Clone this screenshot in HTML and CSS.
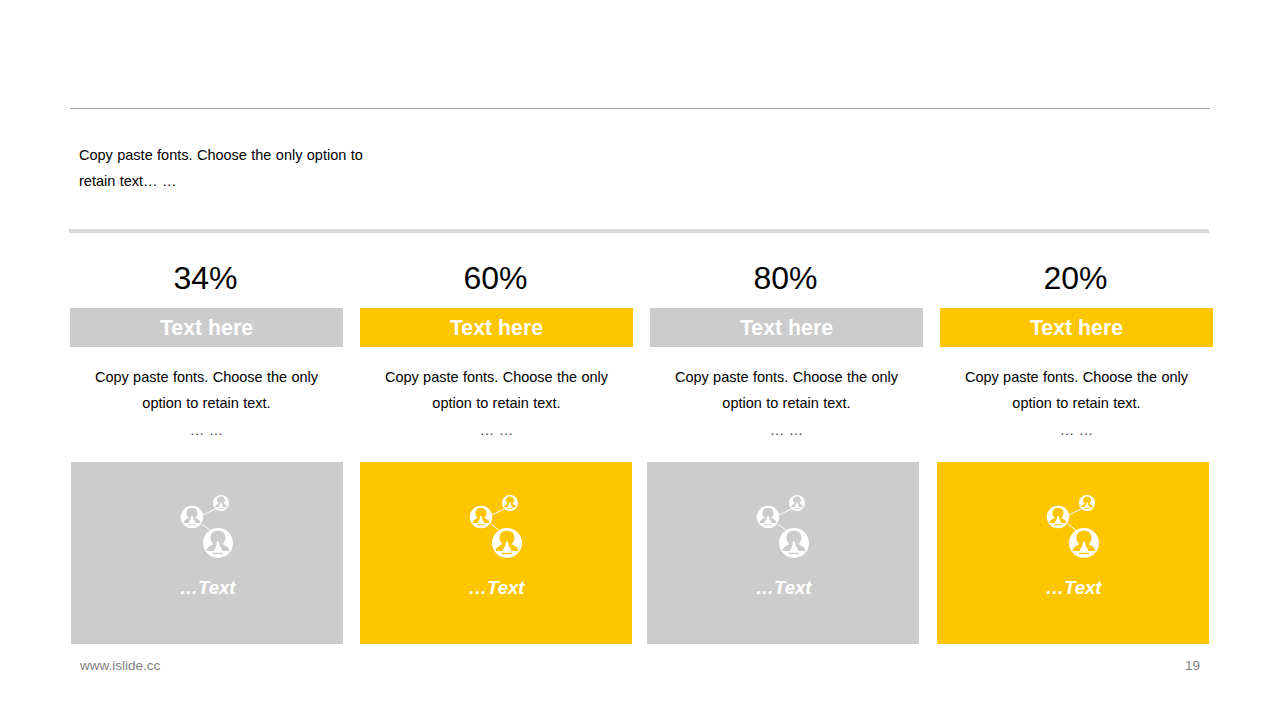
FILE: index.html
```html
<!DOCTYPE html>
<html lang="en">
<head>
<meta charset="utf-8">
<title>Slide 19</title>
<link rel="stylesheet" href="styles.css">
</head>
<body>
<svg class="defs" width="0" height="0" aria-hidden="true">
  <defs>
    <g id="person">
      <circle cx="0" cy="0" r="10" fill="#fff"/>
      <path class="cut" d="M-7.6 5.4 C-7.4 3 -5.6 1.8 -3 0.8 C-4.4 -0.4 -5 -2 -5 -3.6 C-5 -6.4 -2.8 -8.2 0 -8.2 C2.8 -8.2 5 -6.4 5 -3.6 C5 -2 4.4 -0.4 3 0.8 C5.6 1.8 7.4 3 7.6 5.4 L4.4 5.4 L3 3.4 L-3 3.4 L-4.4 5.4 Z"/>
      <path class="cut" d="M-3 2 H3 L4.4 5.4 H-4.4 Z"/>
      <path d="M-0.6 -1 H0.6 L1.2 2 L2.8 4.6 Q2.8 5.8 0 5.8 Q-2.8 5.8 -2.8 4.6 L-1.2 2 Z" fill="#fff"/>
      <rect class="cut" x="-3.4" y="6.5" width="6.8" height="0.9"/>
    </g>
    <g id="network">
      <path d="M24 20 L44 10 M23 29 L37 40" stroke="#fff" stroke-width="1" fill="none"/>
      <use href="#person" transform="translate(13 22) scale(1.12)"/>
      <use href="#person" transform="translate(42 8) scale(0.8)"/>
      <use href="#person" transform="translate(39 48) scale(1.5)"/>
    </g>
  </defs>
</svg>
<main class="slide">
  <hr class="rule-thin">
  <p class="intro">Copy paste fonts. Choose the only option to<br>retain text… …</p>
  <hr class="rule-thick">

  <section class="stats">
    <article class="stat">
      <div class="pct">34%</div>
      <div class="bar grey">Text here</div>
      <p class="desc">Copy paste fonts. Choose the only<br>option to retain text.<br><span class="dots">… …</span></p>
    </article>
    <article class="stat">
      <div class="pct">60%</div>
      <div class="bar gold">Text here</div>
      <p class="desc">Copy paste fonts. Choose the only<br>option to retain text.<br><span class="dots">… …</span></p>
    </article>
    <article class="stat">
      <div class="pct">80%</div>
      <div class="bar grey">Text here</div>
      <p class="desc">Copy paste fonts. Choose the only<br>option to retain text.<br><span class="dots">… …</span></p>
    </article>
    <article class="stat">
      <div class="pct">20%</div>
      <div class="bar gold">Text here</div>
      <p class="desc">Copy paste fonts. Choose the only<br>option to retain text.<br><span class="dots">… …</span></p>
    </article>
  </section>

  <section class="cards">
    <div class="card grey"><svg class="icon" viewBox="0 0 56 64"><use href="#network"/></svg><span class="card-label">…Text</span></div>
    <div class="card gold"><svg class="icon" viewBox="0 0 56 64"><use href="#network"/></svg><span class="card-label">…Text</span></div>
    <div class="card grey"><svg class="icon" viewBox="0 0 56 64"><use href="#network"/></svg><span class="card-label">…Text</span></div>
    <div class="card gold"><svg class="icon" viewBox="0 0 56 64"><use href="#network"/></svg><span class="card-label">…Text</span></div>
  </section>

  <footer class="foot">
    <span>www.islide.cc</span>
    <span>19</span>
  </footer>
</main>
</body>
</html>
```

FILE: styles.css
```css
* { box-sizing: border-box; }
html, body { margin: 0; padding: 0; background: #fff; }
body { width: 1280px; height: 720px; overflow: hidden; font-family: "Liberation Sans", Arial, sans-serif; color: #000; }
.defs { display: block; height: 0; }
.slide { padding: 108px 70px 0; }
.rule-thin { margin: 0; border: 0; height: 1px; background: #a6a6a6; width: 1140px; }
.rule-thick { margin: 0 0 0 -1px; border: 0; height: 4px; background: #d9d9d9; width: 1140px; }
.intro { margin: 0; padding: 33px 0 35px 9px; font-size: 14.5px; line-height: 26px; word-spacing: 0.35px; }
.stats { display: grid; grid-template-columns: repeat(4, 273px); column-gap: 17px; padding-top: 25px; }
.stat { display: flex; flex-direction: column; }
.pct { height: 50px; padding-right: 2px; text-align: center; font-size: 32px; line-height: 40px; }
.bar { height: 39px; text-align: center; color: #fff; font-size: 21.3px; font-weight: 700; line-height: 41px; }
.grey { background: #cccccc; --cut: #cccccc; }
.gold { background: #fdc600; --cut: #fdc600; }
.desc { margin: 0; padding-top: 17px; text-align: center; font-size: 14.5px; line-height: 26px; word-spacing: 0.3px; }
.dots { display: inline-block; padding-top: 1px; color: #404040; }
.cards { display: grid; grid-template-columns: 289px 287px 290px 272px; padding: 19px 0 0 1px; }
.card { width: 272px; height: 182px; display: flex; flex-direction: column; align-items: center; color: #fff; }
.cut { fill: var(--cut); }
.icon { display: block; width: 56px; height: 64px; margin-top: 33px; margin-left: -1px; }
.card-label { margin: 17px 0 0 1px; font-size: 18.6px; font-weight: 700; font-style: italic; line-height: 24px; }
.foot { display: flex; justify-content: space-between; padding: 13px 10px 0 10px; width: 1140px; font-size: 13.5px; line-height: 18px; color: #7f7f7f; }
```
